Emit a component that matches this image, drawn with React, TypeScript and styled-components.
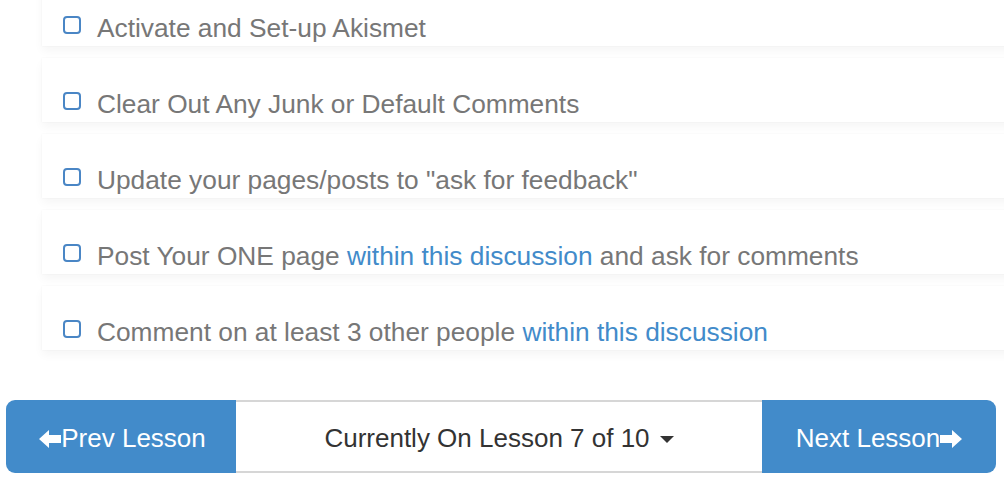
import { FC, ReactNode } from 'react'
import styled, { createGlobalStyle } from 'styled-components'

const GlobalStyle = createGlobalStyle`
  html, body {
    margin: 0;
    padding: 0;
    background: #fff;
    overflow: hidden;
  }
  body {
    font-family: "Helvetica Neue", "Liberation Sans", Arial, sans-serif;
  }
`

const Page = styled.div`
  width: 1004px;
  height: 489px;
  overflow: hidden;
`

const TaskList = styled.ul`
  list-style: none;
  margin: -18px -30px 0 42px;
  padding: 0;
  display: flex;
  flex-direction: column;
  gap: 12px;
`

const TaskCard = styled.li`
  box-sizing: border-box;
  height: 64px;
  display: flex;
  align-items: flex-end;
  padding: 0 0 3px 20px;
  background: #fff;
  box-shadow: 0 5px 9px rgba(0, 0, 0, 0.04), 0 0 2px rgba(0, 0, 0, 0.04);
`

const Check = styled.span`
  box-sizing: border-box;
  flex: none;
  width: 18px;
  height: 18px;
  margin: 0 16px 9px 1px;
  border: 2px solid #4a86c5;
  border-radius: 4px;
  background: #fff;
`

const TaskText = styled.span`
  font-size: 26.3px;
  line-height: 30px;
  color: #777;
`

const Link = styled.a`
  color: #428bca;
  text-decoration: none;
`

const Pager = styled.nav`
  display: flex;
  margin: 50px 8px 0 6px;
  height: 73px;
`

const NavButton = styled.button<{ $side: 'left' | 'right' }>`
  flex: none;
  width: ${({ $side }) => ($side === 'left' ? '230px' : '234px')};
  display: flex;
  align-items: center;
  justify-content: center;
  border: none;
  background: #428bca;
  color: #fff;
  font-family: inherit;
  font-size: 26px;
  border-radius: ${({ $side }) => ($side === 'left' ? '9px 0 0 9px' : '0 9px 9px 0')};
  padding: 3px 0 0 ${({ $side }) => ($side === 'left' ? '3px' : '0')};
`

const Current = styled.div`
  flex: 1;
  display: flex;
  align-items: center;
  justify-content: center;
  gap: 10px;
  padding-top: 3px;
  border-top: 2px solid #d6d6d6;
  border-bottom: 2px solid #d6d6d6;
  color: #333;
  font-size: 26px;
`

const Caret = styled.span`
  width: 0;
  height: 0;
  border-left: 7px solid transparent;
  border-right: 7px solid transparent;
  border-top: 7px solid #333;
  margin-top: 2px;
`

const Arrow: FC<{ dir: 'left' | 'right' }> = ({ dir }) => (
  <svg
    width="22"
    height="20"
    viewBox="0 0 22 20"
    style={{ transform: dir === 'right' ? 'scaleX(-1)' : undefined, marginTop: 1 }}
  >
    <path d="M0 10 L10 1 L10 6 L22 6 L22 14 L10 14 L10 19 Z" fill="#fff" />
  </svg>
)

const tasks: ReactNode[] = [
  'Activate and Set-up Akismet',
  'Clear Out Any Junk or Default Comments',
  'Update your pages/posts to "ask for feedback"',
  <>
    Post Your ONE page <Link href="#">within this discussion</Link> and ask for comments
  </>,
  <>
    Comment on at least 3 other people <Link href="#">within this discussion</Link>
  </>,
]

const App: FC = () => {
  return (
    <Page>
      <GlobalStyle />
      <TaskList>
        {tasks.map((task, i) => (
          <TaskCard key={i}>
            <Check />
            <TaskText>{task}</TaskText>
          </TaskCard>
        ))}
      </TaskList>

      <Pager>
        <NavButton $side="left">
          <Arrow dir="left" />
          Prev Lesson
        </NavButton>
        <Current>
          Currently On Lesson 7 of 10
          <Caret />
        </Current>
        <NavButton $side="right">
          Next Lesson
          <Arrow dir="right" />
        </NavButton>
      </Pager>
    </Page>
  )
}

export default App
